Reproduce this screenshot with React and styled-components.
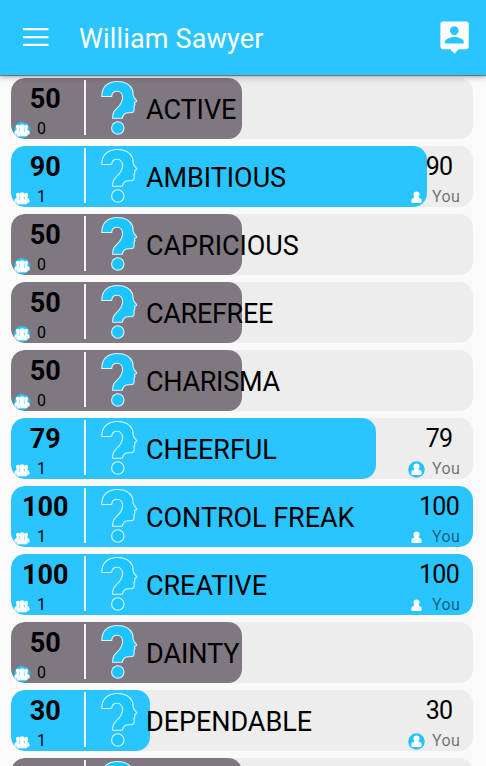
import React from 'react';
import styled, { createGlobalStyle } from 'styled-components';

const GlobalStyle = createGlobalStyle`
body{
    margin:0;
    background:#fafafa;
    font-family: Roboto, "Liberation Sans", sans-serif;
    overflow:hidden;
}
*{
    box-sizing:border-box;
}
`

const Screen = styled.div`
    height: 766px;
    overflow: hidden;
    display: flex;
    flex-direction: column;
`

const Header = styled.header`
    flex: none;
    height: 75px;
    display: flex;
    align-items: center;
    padding: 0 16px 0 23px;
    background: #2ac5ff;
    color: #fff;
    position: relative;
    z-index: 1;
    box-shadow: 0 1px 1px rgba(0,0,0,.42), 0 2px 6px rgba(0,0,0,.3);

    h1{
        flex: 1;
        margin: 2px 0 0 30px;
        font-size: 27px;
        font-weight: 400;
        line-height: 32px;
        letter-spacing: 0.15px;
    }
    svg{
        display: block;
    }
`

const List = styled.main`
    flex: 1;
    min-height: 0;
    display: flex;
    flex-direction: column;
    gap: 7px;
    padding: 3.4px 13px 0 11px;
`

const Row = styled.div`
    flex: none;
    position: relative;
    height: 61px;
    border-radius: 14px;
    background: #ededed;
    overflow: hidden;
`

const Bar = styled.div`
    position: absolute;
    top: 0;
    left: 0;
    bottom: 0;
    border-radius: 14px;
    background: ${p => p.$voted ? '#2ac5ff' : '#7f7880'};
`

const Content = styled.div`
    position: relative;
    height: 100%;
    display: flex;
`

const Score = styled.div`
    flex: none;
    width: 73px;
    padding-top: 5px;

    strong{
        display: block;
        width: 68.5px;
        text-align: center;
        font-size: 27px;
        line-height: 32px;
        font-weight: 700;
    }
`

const Votes = styled.div`
    display: flex;
    align-items: center;
    height: 20px;
    margin-top: 3.2px;
    padding-left: 3px;
    font-size: 16px;

    svg{
        margin: 2px 7px 0 0;
    }
`

const Divider = styled.div`
    flex: none;
    width: 1.5px;
    height: 55px;
    margin-top: 2px;
    background: #f2f2f2;
`

const Name = styled.div`
    flex: 1;
    margin-left: 8.5px;
    padding-top: 1px;
    font-size: 27px;
    line-height: 62px;
    letter-spacing: ${p => p.$tight ? '-0.3px' : '-0.05px'};
    white-space: nowrap;
`

const Mine = styled.div`
    width: 65px;
    padding-top: 5.6px;

    p{
        width: 62px;
        margin: 0;
        text-align: center;
        font-size: 25px;
        line-height: 30px;
        letter-spacing: -0.7px;
    }
`

const You = styled.div`
    display: flex;
    align-items: center;
    height: 20px;
    margin-top: 4.6px;
    font-size: 16px;
    letter-spacing: .4px;
    color: rgba(0,0,0,.54);

    svg{
        margin: 2px 7px 0 0;
    }
`

const HeadIcon = styled.svg`
    flex: none;
    width: 38px;
    height: 58px;
    margin: 0.8px 0 0 14px;
`

const traits = [
    { name: 'ACTIVE', score: 50, votes: 0 },
    { name: 'AMBITIOUS', score: 90, votes: 1 },
    { name: 'CAPRICIOUS', score: 50, votes: 0 },
    { name: 'CAREFREE', score: 50, votes: 0, tight: true },
    { name: 'CHARISMA', score: 50, votes: 0, tight: true },
    { name: 'CHEERFUL', score: 79, votes: 1 },
    { name: 'CONTROL FREAK', score: 100, votes: 1 },
    { name: 'CREATIVE', score: 100, votes: 1 },
    { name: 'DAINTY', score: 50, votes: 0 },
    { name: 'DEPENDABLE', score: 30, votes: 1 },
]

const QuestionHead = () => (
    <HeadIcon viewBox="0 0 38 58" fill="#1cc5ff" stroke="#dff5fc" strokeWidth="1.1" strokeLinejoin="round">
        <path d="M1.8 17.5C1.6 8 8 2.5 17 2.5C24.8 2.5 30.6 5.8 32.4 10.8C33.1 12.8 32.8 15 33.4 17C34 18.8 35.8 20.3 36.8 22.2C37 23 34.6 23 34.4 23.7C34.4 24.3 35.3 24.8 35.1 25.4C34.9 25.9 34.3 26 34.4 26.5C34.6 27.1 34.2 27.4 34 28C34.2 29.5 34.5 31.5 33.5 32.8C32.1 34.8 28.3 33 26.1 34.1C23.6 35.2 22.6 37 22.3 39.2H12.7C12.4 34.6 13.4 32.3 16.3 29.8C19.8 26.8 22.6 23.8 22.6 18.6C22.6 14.9 20.4 12.3 17 12.3C13.5 12.3 11.8 14.3 11.7 17.5Z" />
        <circle cx="17.8" cy="49" r="6.2" />
    </HeadIcon>
)

const GroupIcon = () => (
    <svg width="16" height="16" viewBox="0 0 16 16">
        <circle cx="8" cy="8" r="8" fill="#24c4fc" />
        <g fill="#fff">
            <path d="M2 4.8C1.8 1.9 6 1.9 5.9 4.8C5.8 6 5.3 6.6 5.3 7.2V12.5H1Q.4 12.5 .4 11.5V10Q.5 8.6 2.6 8.1V7.2C2.6 6.5 2.1 6 2 4.8Z" />
            <path d="M14 4.8C14.2 1.9 10 1.9 10.1 4.8C10.2 6 10.7 6.6 10.7 7.2V12.5H15Q15.6 12.5 15.6 11.5V10Q15.5 8.6 13.4 8.1V7.2C13.4 6.5 13.9 6 14 4.8Z" />
            <path stroke="#8bdffb" strokeWidth=".4" d="M5 5C4.8 1.2 11.2 1.2 11 5C10.9 6.7 10.1 7.4 10 8.4Q10 9.1 11.4 9.5Q13.4 10 13.4 11.8V13.3Q13.4 14.2 12.5 14.2H3.5Q2.6 14.2 2.6 13.3V11.8Q2.6 10 4.6 9.5Q6 9.1 6 8.4C5.9 7.4 5.1 6.7 5 5Z" />
        </g>
    </svg>
)

const PersonIcon = () => (
    <svg width="17" height="17" viewBox="0 0 17 17">
        <circle cx="8.5" cy="8.5" r="8.3" fill="#24c4fc" />
        <path fill="#fff" d="M5.4 5.6C5.2 1.6 11.8 1.6 11.6 5.6C11.5 7 10.7 7.5 10.5 8.4Q13.6 9 13.6 11.2V13Q13.6 13.9 12.6 13.9H4.4Q3.4 13.9 3.4 13V11.2Q3.4 9 6.5 8.4C6.3 7.5 5.5 7 5.4 5.6Z" />
    </svg>
)

const Trait = ({ name, score, votes, tight }) => (
    <Row>
        <Bar $voted={votes > 0} style={{ width: score + '%' }} />
        <Content>
            <Score>
                {name && <strong>{score}</strong>}
                {name && <Votes><GroupIcon />{votes}</Votes>}
            </Score>
            <Divider />
            <QuestionHead />
            <Name $tight={tight}>{name}</Name>
            {votes > 0 && (
                <Mine>
                    <p>{score}</p>
                    <You><PersonIcon />You</You>
                </Mine>
            )}
        </Content>
    </Row>
)

const App = () => {
    return (
        <Screen>
            <GlobalStyle />
            <Header>
                <svg width="26" height="19" viewBox="0 0 26 19" fill="#fff">
                    <path d="M0 0h25.5v2.3H0zM0 8h25.5v2.3H0zM0 15.7h25.5v2.3H0z" />
                </svg>
                <h1>William Sawyer</h1>
                <svg width="30" height="33" viewBox="0 0 30 33">
                    <path fill="#fff" d="M3 0.5H26Q28.7 .5 28.7 3.5V25.5Q28.7 28.3 26 28.3H18.6L14.5 32.7L10.3 28.3H3Q.4 28.3 .4 25.5V3.5Q.4 .5 3 .5Z" />
                    <circle cx="14.3" cy="9.6" r="4.3" fill="#2ac5ff" />
                    <path fill="#2ac5ff" d="M5 22.5V20.5C5 17.8 10.5 16 14.3 16S23.7 17.8 23.7 20.5V22.5Z" />
                </svg>
            </Header>
            <List>
                {traits.map(t => <Trait key={t.name} {...t} />)}
                {/* next row, only its top edge is on screen */}
                <Trait score={50} votes={0} />
            </List>
        </Screen>
    );
};

export default App;
